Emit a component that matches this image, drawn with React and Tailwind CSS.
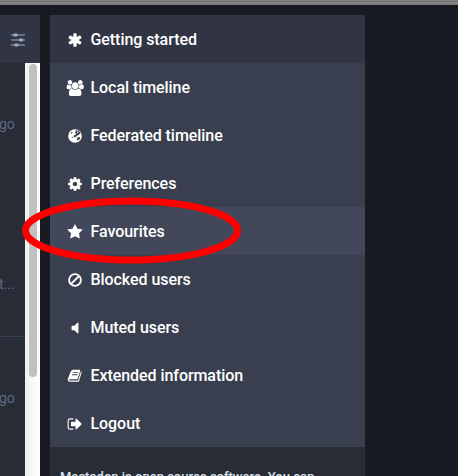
import React from "react";

function Glyph({ children }) {
  return (
    <svg viewBox="0 0 1792 1792" className="h-4 w-4 shrink-0 overflow-visible" fill="currentColor">
      {children}
    </svg>
  );
}

const Asterisk = () => (
  <Glyph>
    <path d="M1546 1050q46 26 59.500 77.500t-12.500 97.500l-64 110q-26 46-77.500 59.500t-97.500-12.500l-266-153v307q0 52-38 90t-90 38h-128q-52 0-90-38t-38-90v-307l-266 153q-46 26-97.500 12.500t-77.500-59.500l-64-110q-26-46-12.500-97.500t59.500-77.500l266-154-266-154q-46-26-59.500-77.500t12.500-97.500l64-110q26-46 77.500-59.500t97.500 12.500l266 153v-307q0-52 38-90t90-38h128q52 0 90 38t38 90v307l266-153q46-26 97.500-12.500t77.500 59.500l64 110q26 46 12.500 97.500t-59.500 77.500l-266 154z" />
  </Glyph>
);

const Users = () => (
  <svg viewBox="0 0 2048 1792" className="h-4 w-[18.3px] shrink-0" fill="currentColor">
    <path d="M657 896q-162 5-265 128h-134q-82 0-138-40.500t-56-118.500q0-353 124-353 6 0 43.500 21t97.500 42.500 119 21.500q67 0 133-23-5 37-5 66 0 159 93 287zm1071 637q0 120-73 189.500t-194 69.500h-874q-121 0-194-69.500t-73-189.500q0-53 3.500-103.500t14-109 26.500-108.500 43-97.500 62-81 85.500-53.500 111.500-20q10 0 43 21.500t73 48 107 48 135 21.500 135-21.500 107-48 73-48 43-21.500q61 0 111.500 20t85.500 53.500 62 81 43 97.500 26.500 108.500 14 109 3.500 103.500zm-1024-1277q0 106-75 181t-181 75-181-75-75-181 75-181 181-75 181 75 75 181zm704 384q0 159-112.500 271.500t-271.500 112.500-271.500-112.500-112.500-271.500 112.500-271.500 271.500-112.500 271.500 112.500 112.500 271.500zm576 225q0 78-56 118.500t-138 40.500h-134q-103-123-265-128 93-128 93-287 0-29-5-66 66 23 133 23 59 0 119-21.500t97.500-42.500 43.500-21q124 0 124 353zm-128-609q0 106-75 181t-181 75-181-75-75-181 75-181 181-75 181 75 75 181z" />
  </svg>
);

const Globe = () => (
  <Glyph>
    <circle cx="896" cy="896" r="768" />
    <path
      className="fill-[#393f4f]"
      d="M980 250l190 20 180 100 150 170-40 130-110 20-60 110-120 10-60 100-130 30-40 110-130-10-60-90 60-140 140-60 100-130-110-40-40-120 90-90z"
    />
    <path d="M1110 430l100-40 80 80-60 90-100-10z" />
    <path className="fill-[#393f4f]" d="M1190 1060l190-60 110 80-60 150-130 120-130 50-60-130z" />
    <path className="fill-[#393f4f]" d="M420 560l90-110 110 30-70 120-90 50zM540 940l130 70 60 110-110-20-100-90z" />
  </Glyph>
);

const Cog = () => (
  <Glyph>
    <path d="M1152 896q0-106-75-181t-181-75-181 75-75 181 75 181 181 75 181-75 75-181zm512-109v222q0 12-8 23t-20 13l-185 28q-19 54-39 91 35 50 107 138 10 12 10 25t-9 23q-27 37-99 108t-94 71q-12 0-26-9l-138-108q-44 23-91 38-16 136-29 186-7 28-36 28h-222q-14 0-24.500-8.500t-11.500-21.500l-28-184q-49-16-90-37l-141 107q-10 9-25 9-14 0-25-11-126-114-165-168-7-10-7-23 0-12 8-23 15-21 51-66.500t54-70.500q-27-50-41-99l-183-27q-13-2-21-12.500t-8-23.500v-222q0-12 8-23t19-13l186-28q14-46 39-92-40-57-107-138-10-12-10-24 0-10 9-23 26-36 98.500-107.500t94.500-71.500q13 0 26 10l138 107q44-23 91-38 16-136 29-186 7-28 36-28h222q14 0 24.500 8.500t11.500 21.500l28 184q49 16 90 37l142-107q9-9 24-9 13 0 25 10 129 119 165 170 7 8 7 22 0 12-8 23-15 21-51 66.500t-54 70.500q26 50 41 98l183 28q13 2 21 12.500t8 23.500z" />
  </Glyph>
);

const Star = () => (
  <Glyph>
    <path d="M1728 647q0 22-26 48l-363 354 86 500q1 7 1 20 0 21-10.500 35.500t-30.500 14.500q-19 0-40-12l-449-236-449 236q-22 12-40 12-21 0-31.500-14.500t-10.500-35.500q0-6 2-20l86-500-364-354q-25-27-25-48 0-37 56-46l502-73 225-455q19-41 49-41t49 41l225 455 502 73q56 9 56 46z" />
  </Glyph>
);

const Ban = () => (
  <Glyph>
    <g fill="none" stroke="currentColor" strokeWidth="215">
      <circle cx="896" cy="896" r="660" />
      <path d="M430 1362L1362 430" />
    </g>
  </Glyph>
);

const VolumeOff = () => (
  <Glyph>
    <path d="M1280 352v1088q0 26-19 45t-45 19-45-19l-333-333h-262q-26 0-45-19t-19-45v-384q0-26 19-45t45-19h262l333-333q19-19 45-19t45 19 19 45z" />
  </Glyph>
);

const Book = () => (
  <Glyph>
    <path
      fillRule="evenodd"
      d="M610 192h790q110 0 80 110l-255 845q-36 115-140 115H300q-70 0-70 55 0 95 145 95h790q80 0 105-80l270-890q12-38 8-75 118 45 82 165l-265 885q-45 135-195 135H340Q180 1552 100 1400q-50-100-10-190 50-90 110-230 5-40-10-70 70-80 130-235 5-40-5-75 80-90 125-230 0-60 170-178zM665 448l-30 96h610l30-96zM590 704l-30 96h610l30-96z"
    />
  </Glyph>
);

const SignOut = () => (
  <Glyph>
    <path d="M704 1440q0 4 1 20t.5 26.500-3 23.500-10 19.500-20.500 6.500h-320q-119 0-203.500-84.500t-84.500-203.500v-704q0-119 84.500-203.500t203.500-84.500h320q13 0 22.500 9.500t9.500 22.500q0 4 1 20t.5 26.500-3 23.500-10 19.500-20.500 6.500h-320q-66 0-113 47t-47 113v704q0 66 47 113t113 47h312l11.500 1 11.500 3 8 5.500 7 9 2 13.500zm928-544q0 26-19 45l-544 544q-19 19-45 19t-45-19-19-45v-288h-448q-26 0-45-19t-19-45v-384q0-26 19-45t45-19h448v-288q0-26 19-45t45-19 45 19l544 544q19 19 19 45z" />
  </Glyph>
);

function Sliders() {
  return (
    <svg viewBox="0 0 14 14" className="h-3.5 w-3.5 shrink-0" fill="currentColor">
      <path d="M0 1.500h14v1H0zM0 6.500h14v1H0zM0 11.500h14v1H0z" />
      <rect x="2.500" y=".5" width="4" height="3" rx=".7" />
      <rect x="8" y="5.500" width="4" height="3" rx=".7" />
      <rect x="3.500" y="10.500" width="4" height="3" rx=".7" />
    </svg>
  );
}

const items = [
  { label: "Getting started", Icon: Asterisk, bg: "bg-[#313543]" },
  { label: "Local timeline", Icon: Users, bg: "bg-[#393f4f]" },
  { label: "Federated timeline", Icon: Globe, bg: "bg-[#393f4f]" },
  { label: "Preferences", Icon: Cog, bg: "bg-[#393f4f]" },
  { label: "Favourites", Icon: Star, bg: "bg-[#42475a]" },
  { label: "Blocked users", Icon: Ban, bg: "bg-[#393f4f]" },
  { label: "Muted users", Icon: VolumeOff, bg: "bg-[#393f4f]" },
  { label: "Extended information", Icon: Book, bg: "bg-[#393f4f]" },
  { label: "Logout", Icon: SignOut, bg: "bg-[#393f4f]" },
];

export default function App() {
  return (
    <div className="relative flex h-[476px] w-[458px] flex-col overflow-hidden bg-[#191b22] font-[Roboto,sans-serif]">
      <div className="h-[5px] shrink-0 border-b border-[#777] bg-[#858585]">
        <div className="h-[2px] border-b border-[#707070]" />
      </div>

      <div className="flex min-h-0 flex-1 gap-2.5 pt-2.5">
        <section className="flex w-10 shrink-0 flex-col">
          <header className="flex h-12 shrink-0 items-center bg-[#313543] pt-px pl-[11px] text-[#9baec8]">
            <Sliders />
          </header>
          <div className="flex min-h-0 flex-1">
            <div className="flex w-[25px] flex-col bg-[#282c37] text-sm leading-5 text-[#606984]">
              <div className="flex h-[274px] shrink-0 flex-col justify-between border-b border-[#393f4f] pt-[51px] pb-[42px]">
                <span className="-ml-px">go</span>
                <span className="-ml-px">t...</span>
              </div>
              <span className="-ml-px pt-[51px]">go</span>
            </div>
            <div className="w-[15px] bg-linear-to-r from-[#f0f0f0] to-white pl-1">
              <div className="mt-px h-[313px] w-2 rounded-full bg-[#c1c1c1]" />
            </div>
          </div>
        </section>

        <section className="flex w-[315px] shrink-0 flex-col bg-[#282c37]">
          <nav>
            {items.map(({ label, Icon, bg }) => (
              <div key={label} className={"flex h-12 items-center pt-px pl-[15px] text-base font-medium text-white " + bg}>
                <span className="mr-[5px] flex w-[20.5px] justify-center">
                  <Icon />
                </span>
                <span className="pt-px tracking-[-0.06px]">{label}</span>
              </div>
            ))}
          </nav>
          <p className="pt-[21px] pl-2.5 text-[13px] leading-[18px] font-medium whitespace-nowrap text-[#d9e1e8]">
            Mastodon is open source software. You can
          </p>
        </section>
      </div>

      <svg className="absolute top-[190px] left-[15px]" width="235" height="80" viewBox="0 0 235 80">
        <ellipse cx="116.500" cy="40.500" rx="106" ry="29.500" fill="none" stroke="#ff0000" strokeWidth="7" />
      </svg>
    </div>
  );
}
